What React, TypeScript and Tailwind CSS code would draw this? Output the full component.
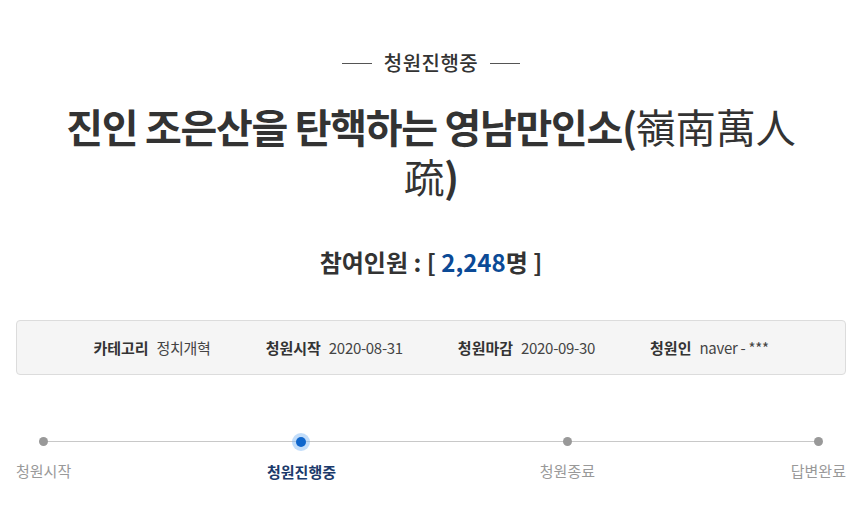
import React from 'react'

const font = { fontFamily: '"Noto Sans CJK KR", "Noto Sans", sans-serif' }

const steps = [
  { label: '청원시작', active: false },
  { label: '청원진행중', active: true },
  { label: '청원종료', active: false },
  { label: '답변완료', active: false },
]

const info = [
  { k: '카테고리', v: '정치개혁' },
  { k: '청원시작', v: '2020-08-31' },
  { k: '청원마감', v: '2020-09-30' },
  { k: '청원인', v: 'naver - ***' },
]

export default function App() {
  return (
    <div className="w-[857px] h-[517px] bg-white overflow-hidden pl-[16px] pr-[11px] pt-[51px] text-[#333]" style={font}>
      {/* 상태 */}
      <div className="flex items-center justify-center gap-[12px]">
        <span className="w-[30px] h-px bg-[#555]"></span>
        <span className="text-[20px] leading-[24px] font-medium tracking-[0.5px] text-[#333]">청원진행중</span>
        <span className="w-[30px] h-px bg-[#555]"></span>
      </div>

      {/* 제목 */}
      <h1 className="mt-[26px] text-center text-[40px] leading-[50px] font-bold tracking-[-1.3px] text-[#333] px-[18px]">
        진인 조은산을 탄핵하는 영남만인소(
        <span className="font-normal tracking-[0px]">嶺南萬人</span>
        <br />
        <span className="font-normal tracking-[0px]">疏</span>)
      </h1>

      {/* 참여인원 */}
      <div className="mt-[46px] text-center text-[24px] leading-[30px] font-bold text-[#333]">
        참여인원 : [ <span className="text-[#0b4a96]">2,248</span>명 ]
      </div>

      {/* 정보 */}
      <div className="mt-[43px] h-[55px] rounded-[4px] border border-[#dcdcdc] bg-[#f5f5f5] flex items-center justify-center gap-[55px]">
        {info.map((it) => (
          <div key={it.k} className="flex items-center gap-[8px] text-[15px] leading-[20px]">
            <span className="font-bold text-[#333]">{it.k}</span>
            <span className="text-[#444] tracking-[-0.3px]">{it.v}</span>
          </div>
        ))}
      </div>

      {/* 진행 단계 */}
      <div className="relative mt-[62px]">
        <div className="absolute left-[27px] right-[27px] top-[4px] h-px bg-[#c8c8c8]"></div>
        <div className="relative flex justify-between">
          {steps.map((s) => (
            <div key={s.label} className={'flex flex-col items-center ' + (s.active ? 'mr-[8px]' : '')}>
              {s.active ? (
                <span className="w-[10px] h-[10px] rounded-full bg-[#0f66cc] shadow-[0_0_0_4px_rgba(120,180,245,0.45)]"></span>
              ) : (
                <span className="w-[9px] h-[9px] rounded-full bg-[#999]"></span>
              )}
              <span
                className={
                  'mt-[15px] text-[15px] leading-[20px] ' +
                  (s.active ? 'font-bold text-[#1b3a6b]' : 'text-[#999]')
                }
              >
                {s.label}
              </span>
            </div>
          ))}
        </div>
      </div>
    </div>
  )
}
